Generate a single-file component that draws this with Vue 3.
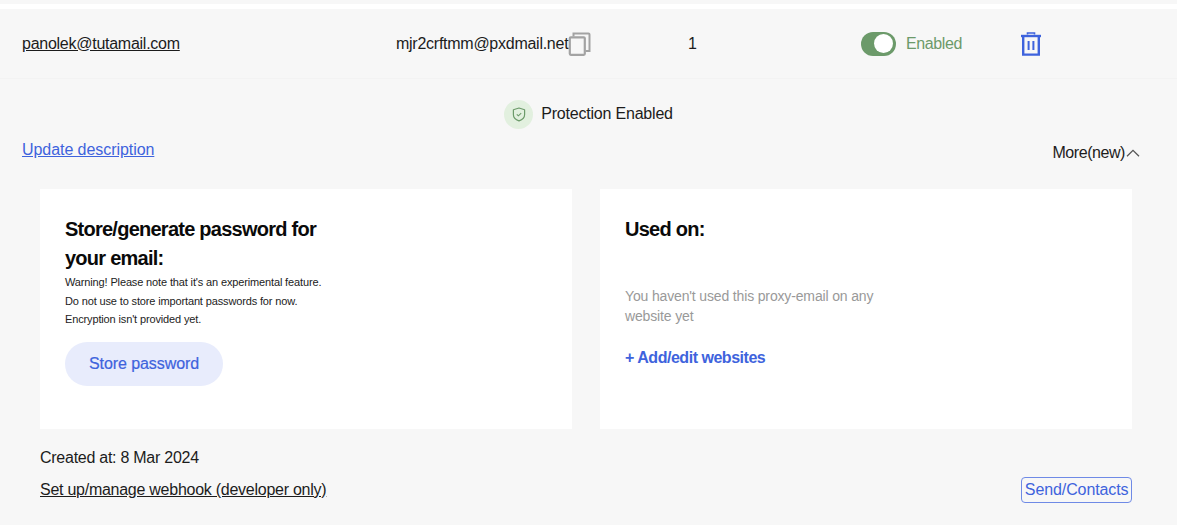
<template>
  <div class="page">
    <div class="top-strip"></div>
    <section class="panel">
      <div class="row">
        <a class="mail-link">panolek@tutamail.com</a>
        <div class="proxy">
          <span>mjr2crftmm@pxdmail.net</span>
          <svg class="copy-icon" width="23" height="24" viewBox="0 0 23 24" fill="none">
            <path d="M5.500 4.500V1.500H20.500a1 1 0 0 1 1 1V19H17.500" stroke="#a3a3a3" stroke-width="2" />
            <rect x="1.800" y="5.300" width="15" height="17.500" rx="1" stroke="#a3a3a3" stroke-width="2.200" />
          </svg>
        </div>
        <div class="count">1</div>
        <div class="status">
          <span class="toggle"><span class="knob"></span></span>
          <span class="status-label">Enabled</span>
        </div>
        <svg class="trash" width="22" height="24" viewBox="0 0 22 24" fill="none">
          <path d="M7.500 2.500V1h7v1.500" stroke="#3e63dd" stroke-width="1.600" />
          <path d="M1 4h20" stroke="#3e63dd" stroke-width="2.400" />
          <path d="M3.200 4.500V22.600H18.800V4.500" stroke="#3e63dd" stroke-width="2.400" />
          <path d="M8.600 9v9M13.400 9v9" stroke="#3e63dd" stroke-width="2" />
        </svg>
      </div>

      <div class="protection">
        <span class="shield-wrap">
          <svg width="14" height="15" viewBox="0 0 14 15" fill="none">
            <path d="M7 1l5.600 1.700v5c0 3-2.400 5-5.600 6.200C3.800 12.700 1.400 10.700 1.400 7.700v-5L7 1z" stroke="#6c9a6a" stroke-width="1.200" stroke-linejoin="round" />
            <path d="M4.800 7.300l1.600 1.500 2.800-2.700" stroke="#6c9a6a" stroke-width="1.100" />
          </svg>
        </span>
        <span>Protection Enabled</span>
      </div>

      <div class="links-row">
        <a class="update-link">Update description</a>
        <div class="more">
          <span>More(new)</span>
          <svg width="14" height="8" viewBox="0 0 14 8" fill="none">
            <path d="M1 7.200L7 1.400l6 5.800" stroke="#555" stroke-width="1.300" />
          </svg>
        </div>
      </div>

      <div class="cards">
        <div class="card">
          <h3 class="card-title narrow">Store/generate password for your email:</h3>
          <p class="warning">Warning! Please note that it's an experimental feature.</p>
          <p class="warning">Do not use to store important passwords for now.</p>
          <p class="warning">Encryption isn't provided yet.</p>
          <button class="store-btn" type="button">Store password</button>
        </div>
        <div class="card">
          <h3 class="card-title">Used on:</h3>
          <p class="empty-note">You haven't used this proxy-email on any website yet</p>
          <a class="add-link">+ Add/edit websites</a>
        </div>
      </div>

      <div class="footer">
        <div class="footer-left">
          <div class="created">Created at: 8 Mar 2024</div>
          <a class="mail-link">Set up/manage webhook (developer only)</a>
        </div>
        <a class="send-btn">Send/Contacts</a>
      </div>
    </section>
  </div>
</template>

<script setup>
</script>

<style scoped>
.page {
  width: 1177px;
  height: 530px;
  font-family: "Liberation Sans", Arial, sans-serif;
  font-size: 16px;
  letter-spacing: -0.26px;
  color: #1c1c1c;
}
.top-strip {
  height: 4px;
  background: #f7f7f7;
}
.panel {
  margin-top: 5px;
  height: 516px;
  background: #f7f7f7;
}
.row {
  display: grid;
  grid-template-columns: 374px 292px 173px 159px auto;
  align-items: center;
  height: 70px;
  padding-left: 22px;
  border-bottom: 1px solid #f3f3f3;
  box-sizing: border-box;
}
.mail-link {
  color: #1c1c1c;
  text-decoration: underline;
}
.proxy {
  display: flex;
  align-items: center;
}
.copy-icon {
  margin-top: 1px;
}
.status {
  display: flex;
  align-items: center;
  gap: 10px;
}
.toggle {
  display: flex;
  align-items: center;
  justify-content: flex-end;
  width: 35px;
  height: 24px;
  padding-right: 3px;
  box-sizing: border-box;
  border-radius: 12px;
  background: #6c9a6a;
}
.knob {
  width: 19px;
  height: 19px;
  border-radius: 50%;
  background: #fff;
}
.status-label {
  color: #6c9a6a;
  letter-spacing: -0.4px;
}
.protection {
  display: flex;
  align-items: center;
  justify-content: center;
  gap: 8px;
  height: 30px;
  margin-top: 20px;
  letter-spacing: -0.2px;
}
.shield-wrap {
  display: flex;
  align-items: center;
  justify-content: center;
  width: 29px;
  height: 29px;
  border-radius: 50%;
  background: #e2f0df;
}
.links-row {
  display: flex;
  justify-content: space-between;
  align-items: flex-start;
  margin-top: 12px;
  padding: 0 37px 0 22px;
}
.update-link {
  color: #3e63dd;
  letter-spacing: -0.06px;
  text-decoration: underline;
}
.more {
  display: flex;
  align-items: center;
  gap: 1px;
  margin-top: 3px;
  letter-spacing: -0.44px;
}
.cards {
  display: grid;
  grid-template-columns: 532px 532px;
  gap: 28px;
  margin-top: 27px;
  padding-left: 40px;
}
.card {
  height: 240px;
  padding: 26px 25px 25px;
  box-sizing: border-box;
  background: #fff;
}
.card-title {
  margin: 0;
  font-size: 20px;
  line-height: 29px;
  letter-spacing: -0.75px;
  font-weight: 700;
  color: #0a0a0a;
}
.narrow {
  width: 270px;
}
.warning {
  margin: 0;
  font-size: 11px;
  line-height: 18.500px;
  letter-spacing: -0.14px;
  color: #222;
}
.store-btn {
  display: block;
  width: 158px;
  height: 44px;
  margin-top: 13px;
  border: 0;
  border-radius: 22px;
  background: #e8ecfc;
  color: #3e63dd;
  font-family: inherit;
  font-size: 16px;
  font-weight: 400;
  letter-spacing: -0.07px;
  -webkit-text-stroke: 0.200px #3e63dd;
}
.empty-note {
  width: 270px;
  margin: 42px 0 0;
  font-size: 14px;
  line-height: 20px;
  letter-spacing: -0.15px;
  color: #999;
}
.add-link {
  display: block;
  margin-top: 23px;
  font-size: 16px;
  font-weight: 700;
  letter-spacing: -0.47px;
  color: #3e63dd;
}
.footer {
  display: flex;
  justify-content: space-between;
  align-items: flex-end;
  margin-top: 20px;
  padding: 0 45px 0 40px;
}
.footer-left {
  display: flex;
  flex-direction: column;
  gap: 14px;
}
.send-btn {
  margin-bottom: -4px;
  padding: 3px 2.500px;
  border: 1px solid #6f8ae6;
  border-radius: 4px;
  color: #3e63dd;
  letter-spacing: -0.1px;
}
</style>

<style>
body {
  background: #fff;
}
</style>
